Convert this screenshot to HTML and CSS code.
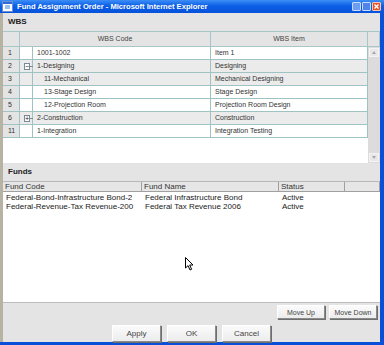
FILE: index.html
```html
<!DOCTYPE html>
<html lang="en">
<head>
    <meta charset="UTF-8">
    <title>Fund Assignment Order - Microsoft Internet Explorer</title>
    <link rel="stylesheet" href="styles.css">
</head>
<body>
    <div class="window">
        <div class="title-bar">
            <svg class="app-icon" width="11" height="11" viewBox="0 0 11 11">
                <rect x="0.5" y="0.5" width="10" height="10" fill="#ffffff" stroke="#6a8fd0"/>
                <rect x="1" y="1" width="9" height="2" fill="#2d6ad8"/>
                <path d="M3 5 H8 M3 7 H8" stroke="#3a7be0" stroke-width="1"/>
            </svg>
            <span class="title-text">Fund Assignment Order - Microsoft Internet Explorer</span>
            <div class="title-buttons">
                <span class="tb tb-min"></span>
                <span class="tb tb-max"></span>
                <span class="tb tb-close">
                    <svg width="9" height="9" viewBox="0 0 9 9"><path d="M2.5 2.5 L6.5 6.5 M6.5 2.5 L2.5 6.5" stroke="#fff" stroke-width="1.4"/></svg>
                </span>
            </div>
        </div>

        <div class="frame">
            <div class="section-head">WBS</div>

            <div class="wbs-header">
                <div class="hcell"></div>
                <div class="hcell">WBS Code</div>
                <div class="hcell">WBS Item</div>
                <div class="hcell"></div>
            </div>

            <div class="wbs-body">
                <div class="wbs-rows">
                    <div class="row white">
                        <div class="c-num">1</div><div class="c-tog"></div>
                        <div class="c-code">1001-1002</div><div class="c-item">Item 1</div>
                    </div>
                    <div class="row gray">
                        <div class="c-num">2</div><div class="c-tog"><span class="box">&minus;</span><span class="stub"></span></div>
                        <div class="c-code">1-Designing</div><div class="c-item">Designing</div>
                    </div>
                    <div class="row gray">
                        <div class="c-num">3</div><div class="c-tog"></div>
                        <div class="c-code child">11-Mechanical</div><div class="c-item">Mechanical Designing</div>
                    </div>
                    <div class="row white">
                        <div class="c-num">4</div><div class="c-tog"></div>
                        <div class="c-code child">13-Stage Design</div><div class="c-item">Stage Design</div>
                    </div>
                    <div class="row white">
                        <div class="c-num">5</div><div class="c-tog"></div>
                        <div class="c-code child">12-Projection Room</div><div class="c-item">Projection Room Design</div>
                    </div>
                    <div class="row gray">
                        <div class="c-num">6</div><div class="c-tog"><span class="box">+</span><span class="stub"></span></div>
                        <div class="c-code">2-Construction</div><div class="c-item">Construction</div>
                    </div>
                    <div class="row white">
                        <div class="c-num">11</div><div class="c-tog"></div>
                        <div class="c-code">1-Integration</div><div class="c-item">Integration Testing</div>
                    </div>
                </div>
                <div class="vscroll">
                    <span class="arrow up"></span>
                    <span class="track"></span>
                    <span class="arrow down"></span>
                </div>
            </div>

            <div class="section-head">Funds</div>

            <div class="funds-header">
                <div class="fcell">Fund Code</div>
                <div class="fcell">Fund Name</div>
                <div class="fcell">Status</div>
                <div class="fcell"></div>
            </div>

            <div class="funds-list">
                <div class="frow">
                    <span>Federal-Bond-Infrastructure Bond-2</span>
                    <span>Federal Infrastructure Bond</span>
                    <span>Active</span>
                </div>
                <div class="frow">
                    <span>Federal-Revenue-Tax Revenue-200</span>
                    <span>Federal Tax Revenue 2006</span>
                    <span>Active</span>
                </div>
            </div>

            <div class="button-bar">
                <div class="move-buttons">
                    <button class="btn small">Move Up</button>
                    <button class="btn small">Move Down</button>
                </div>
                <div class="main-buttons">
                    <button class="btn">Apply</button>
                    <button class="btn">OK</button>
                    <button class="btn">Cancel</button>
                </div>
            </div>
        </div>

        <svg class="cursor" width="9" height="14" viewBox="0 0 9 14">
            <path d="M0.5 0.5 V11 L3 8.6 L5 13 L6.6 12.3 L4.7 8 H8 Z" fill="#fff" stroke="#000" stroke-width="1"/>
        </svg>
    </div>
</body>
</html>
```

FILE: styles.css
```css
html, body {
    margin: 0;
    padding: 0;
}

body {
    width: 384px;
    height: 345px;
    overflow: hidden;
    font-family: 'Liberation Sans', Arial, sans-serif;
    color: #333;
}

.window {
    position: relative;
    width: 384px;
    height: 345px;
    display: flex;
    flex-direction: column;
    background: #0a4fd8;
}

.title-bar {
    flex-shrink: 0;
    height: 13px;
    display: flex;
    align-items: center;
    padding: 0 3px 0 2px;
    overflow: hidden;
    background: linear-gradient(#3c8ef6, #0c5ee6 45%, #0752da);
}

.app-icon {
    margin-right: 4px;
}

.title-text {
    flex: 1;
    color: #fff;
    font-weight: bold;
    font-size: 7.6px;
    line-height: 13px;
    white-space: nowrap;
}

.title-buttons {
    display: flex;
    gap: 1px;
}

.tb {
    width: 9px;
    height: 9px;
    box-sizing: border-box;
    border: 1px solid #c9dafa;
    border-radius: 1px;
    background: #5b8ff0;
    display: block;
}

.tb-min {
    background: #6e9df2;
}

.tb-max {
    background: #4f84ea;
}

.tb-close {
    background: #e1572e;
    border-color: #f3c8b8;
    position: relative;
}

.tb-close svg {
    position: absolute;
    left: -1px;
    top: -1px;
}

.frame {
    flex: 1;
    display: flex;
    flex-direction: column;
    margin: 0 4px 3px 0;
    border-left: 3px solid #b6b3a5;
    background: #e4e4e4;
}

.section-head {
    height: 18px;
    box-sizing: border-box;
    padding-left: 5px;
    font-weight: bold;
    font-size: 8px;
    line-height: 18px;
    color: #222;
    background: #e4e4e4;
}

/* WBS grid */

.wbs-header {
    display: grid;
    grid-template-columns: 17px 191px 157px 12px;
    height: 15px;
    background: #e4e4e4;
    border-top: 1px solid #a7c7c7;
}

.hcell {
    border-right: 1px solid #a7c7c7;
    border-bottom: 1px solid #a7c7c7;
    font-size: 7px;
    line-height: 14px;
    text-align: center;
    color: #444;
}

.wbs-body {
    display: flex;
    height: 116px;
    background: #fff;
}

.wbs-rows {
    width: 365px;
}

.row {
    display: grid;
    grid-template-columns: 17px 13px 178px 157px;
    height: 13px;
    font-size: 7px;
    line-height: 12px;
}

.row > div {
    border-right: 1px solid #9fc2c2;
    border-bottom: 1px solid #9fc2c2;
    box-sizing: border-box;
}

.row.white > div {
    background: #fff;
}

.row.gray > div {
    background: #ebebeb;
}

.row.white > .c-num,
.row.gray > .c-num {
    background: #e4e4e4;
    padding-left: 5px;
}

.c-tog {
    display: flex;
    align-items: center;
    padding-left: 4px;
}

.box {
    width: 7px;
    height: 7px;
    box-sizing: border-box;
    border: 1px solid #7a8a9a;
    background: #fff;
    font-size: 7px;
    line-height: 5px;
    text-align: center;
    color: #222;
}

.stub {
    width: 3px;
    border-top: 1px dotted #888;
}

.c-code {
    padding-left: 4px;
}

.c-code.child {
    padding-left: 11px;
}

.c-item {
    padding-left: 4px;
}

.vscroll {
    width: 12px;
    display: flex;
    flex-direction: column;
    align-items: center;
    padding: 1px 0;
    box-sizing: border-box;
    background: #dcdcdc;
}

.track {
    flex: 1;
}

.arrow {
    width: 10px;
    height: 9px;
    box-sizing: border-box;
    border: 1px solid #f4f4f4;
    background: #e8e8e8;
    position: relative;
}

.arrow::after {
    content: '';
    position: absolute;
    left: 2px;
    border-left: 2px solid transparent;
    border-right: 2px solid transparent;
}

.arrow.up::after {
    top: 2px;
    border-bottom: 3px solid #a8a8a8;
}

.arrow.down::after {
    top: 2px;
    border-top: 3px solid #a8a8a8;
}

/* Funds list */

.funds-header {
    display: grid;
    grid-template-columns: 139px 137px 66px 35px;
    height: 10px;
    background: #e6e6e6;
    border-top: 1px solid #b8b8b8;
}

.fcell {
    border-right: 1px solid #a0a0a0;
    border-bottom: 1px solid #a0a0a0;
    box-sizing: border-box;
    font-size: 8px;
    line-height: 9px;
    padding-left: 2px;
    color: #333;
}

.funds-list {
    height: 110px;
    background: #fff;
    padding-top: 1px;
    box-sizing: border-box;
}

.frow {
    display: grid;
    grid-template-columns: 139px 137px 66px;
    height: 9px;
    font-size: 8px;
    line-height: 9px;
    color: #222;
}

.frow span {
    padding-left: 3px;
    white-space: nowrap;
}

/* Buttons */

.button-bar {
    flex: 1;
    display: flex;
    flex-direction: column;
    gap: 6px;
    padding-top: 2px;
    background: #e4e4e4;
    border-top: 1px solid #bdbdbd;
}

.move-buttons {
    display: flex;
    justify-content: flex-end;
    gap: 4px;
    padding-right: 3px;
}

.main-buttons {
    display: flex;
    justify-content: center;
    gap: 6px;
}

.btn {
    width: 49px;
    height: 17px;
    padding: 0;
    font-family: 'Liberation Sans', Arial, sans-serif;
    font-weight: normal;
    font-size: 8px;
    color: #444;
    background: linear-gradient(#fbfbfb, #ececec);
    border: 1px solid;
    border-color: #ffffff #8a8a8a #8a8a8a #ffffff;
    box-shadow: 1px 1px 0 #6e6e6e;
}

.btn.small {
    width: 48px;
    height: 14px;
    font-size: 7px;
}

.cursor {
    position: absolute;
    left: 185px;
    top: 257px;
}
```
